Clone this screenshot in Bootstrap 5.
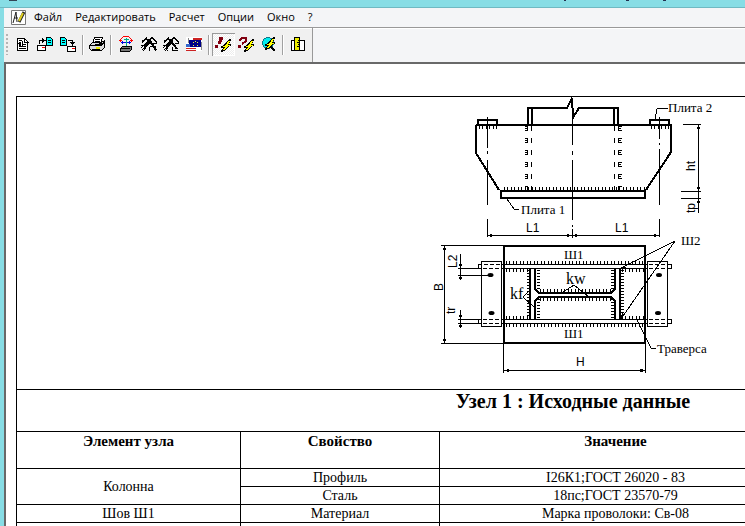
<!DOCTYPE html>
<html lang="ru">
<head>
<meta charset="utf-8">
<meta name="viewport" content="width=device-width, initial-scale=1">
<title>Узел 1 : Исходные данные</title>
<link href="https://cdn.jsdelivr.net/npm/bootstrap@5.3.0/dist/css/bootstrap.min.css" rel="stylesheet">
<style>
body{background:#87dde5;color:#000;font-family:"Open Sans","Noto Sans",sans-serif;font-size:11px;line-height:16px}
.title-strip{height:8px;border-bottom:1px solid #6fb9c2}
.title-strip svg{display:block}
.app-window{margin-left:4px;background:#f4f5f7}
.menu-bar{height:19px;padding-left:6px}
.menu-bar .btn{font-size:11px;line-height:16px;padding:0 6px 1px 7px;border:0;border-radius:0;color:#000}
.tool-area{height:35px;border-top:1px solid #999;background:#f4f5f7;box-shadow:inset 0 1px #fff}
.tool-bar{padding:0 3px 1px 2px;background:#f0f0f0;border-right:1px solid #999;box-shadow:inset 0 1px #fff;width:309px}
.grip{width:2px;height:21px;margin-right:3px;background:repeating-linear-gradient(#b4b4b4 0 2px,transparent 2px 4px)}
.tool-bar .btn{width:23px;height:23px;padding:0 0 2px;border:0;border-radius:0;line-height:0}
.tool-bar .btn.active{background:repeating-conic-gradient(#fff 0 25%,#ececec 0 50%) 0 0/2px 2px;box-shadow:inset 1px 1px #999,inset -1px -1px #fff}
.tool-bar svg,.drawing{shape-rendering:crispEdges}
.tool-sep{width:1px;height:20px;margin:0 3px 0 2px;background:#a0a0a0;box-shadow:1px 0 #fff}
.sheet{border-top:2px solid #696969;border-left:2px solid #696969;background:#fff;padding:32px 0 0 10px;height:calc(100vh - 62px)}
.report{width:1114px;table-layout:fixed;border-collapse:collapse;font-family:"Liberation Serif",serif;font-size:14px;line-height:17px;text-align:center;color:#000;margin:0}
.report td,.report th{border:1px solid #000;padding:0}
.report .tall{height:37px;vertical-align:top;padding-top:1px;font-size:15px}
.report .heading{height:42px;vertical-align:top;font-size:20px;line-height:23px}
.drawing{display:block;margin:0 auto}
.drawing text{fill:#000;font-family:"Liberation Serif",serif;font-size:13px}
.drawing .sans{font-family:"Liberation Sans",sans-serif;font-size:12px}
.drawing .big{font-size:16px}
</style>
<script src="https://cdn.jsdelivr.net/npm/bootstrap@5.3.0/dist/js/bootstrap.bundle.min.js"></script>
</head>
<body class="overflow-hidden">
<div class="title-strip"><svg width="745" height="2" aria-hidden="true"><path d="M9 0h8v1H9z" fill="#345"/><path d="M564 0h2v1h-2zM626 0h3v1h-3zM663 0h3v1h-3z" fill="#213050"/></svg></div>
<div class="app-window">
<nav class="menu-bar d-flex align-items-center" aria-label="Меню">
<svg width="17" height="17" viewBox="0 0 17 17" aria-hidden="true"><path fill="#fff" stroke="#777" d="M1.500 1.500h14v14h-14z"/><path fill="none" stroke="#222" d="M3 14L6 3l1 10M4 9h4"/><path stroke="#222" stroke-width="3" d="M9 13l5-10"/><path stroke="#e0cf20" stroke-width="2" d="M9 12l4-8"/></svg>
<button class="btn" type="button">Файл</button><button class="btn" type="button">Редактировать</button><button class="btn" type="button">Расчет</button><button class="btn" type="button">Опции</button><button class="btn" type="button">Окно</button><button class="btn" type="button">?</button>
</nav>
<div class="tool-area d-flex">
<div class="tool-bar d-flex align-items-center" role="toolbar" aria-label="Инструменты">
<span class="grip"></span>
<button class="btn" type="button" aria-label="Проект"><svg width="16" height="16"><path fill="#fff" stroke="#000" d="M3.500 2.500h7l3 3v9h-10z"/><path stroke="#000" fill="none" d="M10.500 2v4h4M5 4.500h3M4 7.500h3M5 10.500h3M9 10.500h3M5 12.500h7M8.500 5v6"/><path d="M5 6h2v4H5zM8 8h4v1H8z"/></svg></button>
<button class="btn" type="button" aria-label="Открыть"><svg width="16" height="16"><path fill="#0ff" stroke="#000" d="M9.500 1.500h4l2 2v6h-6z"/><path stroke="#000" fill="none" d="M11 4.500h3M11 6.500h3M2.500 8V4.500H7"/><path d="M5 2l4 2.500L5 7z"/><path fill="#fff" stroke="#000" d="M.500 9.500h8v5h-8z"/><path fill="red" d="M5 11h3v1H5z"/></svg></button>
<button class="btn" type="button" aria-label="Сохранить"><svg width="16" height="16"><path fill="#0ff" stroke="#000" d="M.500 1.500h4l2 2v6h-6z"/><path stroke="#000" fill="none" d="M2 4.500h3M2 6.500h3M8 4.500h4.500V8"/><path d="M10 6h5l-2.500 4z"/><path fill="#fff" stroke="#000" d="M7.500 10.500h8v5h-8z"/><path fill="red" d="M12 12h3v1h-3z"/></svg></button>
<span class="tool-sep"></span>
<button class="btn" type="button" aria-label="Печать"><svg width="16" height="16"><path fill="#fff" stroke="#000" d="M3.500 7.500l2-6h8l-2 6z"/><path stroke="#000" fill="none" d="M6 3.500h5M6 5.500h5"/><path fill="#ddd" stroke="#000" d="M.500 9.500l3-3h9l3-2v7l-3 3h-10l-2-2z"/><path stroke="#000" d="M1 9.500h11l3-3M3 13.500h8"/><path fill="#ee0" d="M7 11h4v2H7z"/></svg></button>
<span class="tool-sep"></span>
<button class="btn" type="button" aria-label="Нагрузки"><svg width="16" height="16"><path fill="none" stroke="red" d="M2.500 6V3.500l3-3h5l3 3V6M1 4.500h3M12 4.500h3"/><path stroke="#00d" fill="none" d="M3 6.500h10M4.500 5v3M11.500 5v3"/><path stroke="#0a8" d="M8.500 2v8M6 3.500h5"/><path fill="#777" stroke="#000" d="M2.500 15.500v-3l2-2h9v3l-2 2z"/><path stroke="#000" d="M3 12.500h9"/></svg></button>
<button class="btn" type="button" aria-label="Расчет"><svg width="16" height="16"><g stroke="#000" fill="none"><path stroke-width="2" d="M1 6l5-4M9 5l6 9"/><path d="M0 9.500h3l8-8M0 12l4-4M1 14l9-10M2 15l8-10M6 4l3 3M11 1.500l4 4v2h-3M8.500 11v4M9 10.500h5.500V15M5 3.500h4"/></g></svg></button>
<button class="btn" type="button" aria-label="Подбор"><svg width="16" height="16"><g stroke="#000" fill="none"><path stroke-width="2" d="M1 6l5-4M8 5l6 8"/><path d="M0 9.500h3l8-8M0 12l4-4M1 14l9-10M2 15l8-10M6 4l3 3M11 1.500l4 4v2h-3M5 3.500h4M9.500 11v3h5M2 12l3 3"/></g></svg></button>
<button class="btn" type="button" aria-label="Язык"><svg width="16" height="16"><path fill="#fff" d="M0 1h16v14H0z"/><path fill="#c22" d="M7 2h9v2H7zM0 12h10v1H0zM0 14h10v1H0z"/><path fill="#008" d="M3 4h12v7H3z"/><path fill="#36c" d="M0 8h4v3H0z"/><path fill="#ee3" d="M9 5h1v1H9zM7 6h1v1H7zM11 6h1v1h-1zM7 9h1v1H7zM11 9h1v1h-1z"/><path fill="none" stroke="#888" d="M2.500 2v5M15.500 6v8"/></svg></button>
<span class="tool-sep"></span>
<button class="btn active" type="button" aria-label="Быстрый расчет" aria-pressed="true"><svg width="16" height="16"><path fill="#800010" d="M4 1h4v3H7v2H6v2H3V5h1zM0 9h3v3H0z"/><path fill="#000" d="M14 3h2v2h-1v2h-1v1h2v2h-2v1h-1v1h-1v1h-1v1h-1v1H8v1H6v-2h1v-1h1v-1H6v-2h2V9h1V8h1V7h1V6h1V5h1V4h1z"/><path fill="#ff0" d="M13 5h2v1h-1v2h-1v1h2v1h-2v1h-1v1h-1v1h-1v1H8v-1h1v-1h1v-1H8v-1h2V9h1V8h1V6h1z"/></svg></button>
<button class="btn" type="button" aria-label="Справка"><svg width="16" height="16"><path fill="none" stroke="#800010" stroke-width="2" d="M1 5l3-3h4v3L4 8"/><path fill="#800010" d="M0 9h3v3H0z"/><path fill="#000" d="M14 3h2v2h-1v2h-1v1h2v2h-2v1h-1v1h-1v1h-1v1h-1v1H8v1H6v-2h1v-1h1v-1H6v-2h2V9h1V8h1V7h1V6h1V5h1V4h1z"/><path fill="#ff0" d="M13 5h2v1h-1v2h-1v1h2v1h-2v1h-1v1h-1v1h-1v1H8v-1h1v-1h1v-1H8v-1h2V9h1V8h1V6h1z"/></svg></button>
<button class="btn" type="button" aria-label="Просмотр"><svg width="16" height="16"><circle cx="7" cy="7" r="5.500" fill="#0ee" stroke="#178"/><path stroke="#000" stroke-width="2" d="M10 11l4 4"/><g transform="translate(-2 -2)"><path fill="#000" d="M14 3h2v2h-1v2h-1v1h2v2h-2v1h-1v1h-1v1h-1v1h-1v1H8v1H6v-2h1v-1h1v-1H6v-2h2V9h1V8h1V7h1V6h1V5h1V4h1z"/><path fill="#ff0" d="M13 5h2v1h-1v2h-1v1h2v1h-2v1h-1v1h-1v1h-1v1H8v-1h1v-1h1v-1H8v-1h2V9h1V8h1V6h1z"/></g></svg></button>
<span class="tool-sep"></span>
<button class="btn" type="button" aria-label="Размеры"><svg width="16" height="16"><path fill="#fff" stroke="#000" d="M1.500 4.500h13v10h-13z"/><path fill="#ee0" stroke="#000" d="M4.500 1.500h5v13h-5z"/><path stroke="#000" d="M8 4.500h2M7 6.500h3M8 8.500h2M7 10.500h3"/></svg></button>
</div>
</div>
<main class="sheet overflow-hidden">
<table class="report">
<colgroup><col style="width:224px"><col style="width:199px"><col style="width:352px"><col></colgroup>
<tbody>
<tr><td colspan="4">
<svg class="drawing" width="290" height="292" viewBox="428 97 290 292" role="img" aria-label="Схема базы колонны">
<!-- elevation -->
<g fill="none" stroke="#000" stroke-width="2">
<path d="M528 125V108H567L571 100L574 116L579 108H618V125M532 108V125M614 108V125"/>
<path d="M478 125V120H497V125M650 125V120H669V125"/>
<path d="M476 125H671V152L646 190M476 125V153L499 190M501 191H645V198H501Z"/>
</g>
<g fill="none" stroke="#000">
<path d="M531.500 126V190M614.500 126V190" stroke-dasharray="5 7"/>
<path d="M527.500 126V190M618.500 126V190" stroke-dasharray="5 7"/>
<path d="M525 126.500h3M525 128.500h3M525 130.500h3M525 138.500h3M525 140.500h3M525 142.500h3M525 150.500h3M525 152.500h3M525 154.500h3M525 162.500h3M525 164.500h3M525 166.500h3M525 174.500h3M525 176.500h3M525 178.500h3M525 186.500h3M619 126.500h3M619 128.500h2M619 130.500h3M619 138.500h3M619 140.500h2M619 142.500h3M619 150.500h3M619 152.500h2M619 154.500h3M619 162.500h3M619 164.500h2M619 166.500h3M619 174.500h3M619 176.500h2M619 178.500h3M619 186.500h3"/>
<path d="M504 188.500H645M479 127.500H499M651 127.500H670" stroke-width="3" stroke-dasharray="1 2 1 3"/>
<path d="M487.500 117V148M487.500 151V154M487.500 160V205M487.500 219V237M572.500 98V145M572.500 151V155M572.500 160V220M572.500 225V227M572.500 229V238M659.500 117V139M659.500 143V145M659.500 149V205M659.500 219V237"/>
<path d="M507 199L514 209H519M655 119L657 109L659 108H668"/>
<path d="M487 235.500H659M698.500 125V213M683 124.500H701M681 191.500H701M681 198.500H701"/>
</g>
<path d="M488 235.500l4-2v4zM571 235.500l-4-2v4zM573 235.500l4-2v4zM658 235.500l-4-2v4zM698.500 125l-2 4h4zM698.500 191l-2-4h4zM698.500 199l-2 4h4z"/>
<!-- plan -->
<path fill="none" stroke="#000" stroke-width="2" d="M504 246H645V343H504Z"/>
<g fill="none" stroke="#000">
<path d="M481.500 261.500h20v65h-20zM647.500 261.500h20v65h-20z"/>
<path d="M504 264.500H647M504 268.500H647M504 319.500H647M504 323.500H647M481 264.500h-3v4h3M481 319.500h-3v4h3M668 264.500h3v4h-3M668 319.500h3v4h-3"/>
<path d="M484 264.500H504M483 268.500H504M483 319.500H504M483 323.500H504M649 264.500H667M649 268.500H667M649 319.500H667M649 323.500H667" stroke-dasharray="4 2"/>
<path d="M506 262.500H644M506 325.500H644M506 270.500H529M622 270.500H644M506 317.500H529M622 317.500H644M540 290.500H613M540 299.500H613" stroke-width="3" stroke-dasharray="1 2 1 3"/>
<path d="M528.500 270V318M538.500 270V290M538.500 299V318M612.500 270V290M612.500 299V318M622.500 270V318" stroke-width="3" stroke-dasharray="1 2"/>
</g>
<g fill="none" stroke="#000" stroke-width="2">
<path d="M530 269V319M620 269V319M535 269V289L539 293H611L615 289V269M535 319V301L539 297H611L615 301V319"/>
</g>
<g shape-rendering="auto"><ellipse cx="490.500" cy="275" rx="3" ry="2"/><ellipse cx="491.500" cy="313" rx="3" ry="2"/><ellipse cx="659" cy="275" rx="3" ry="2"/><ellipse cx="658" cy="313" rx="3" ry="2"/></g>
<g fill="none" stroke="#000">
<path d="M444.500 245V343M441 245.500H504M441 343.500H504M460.500 254V280M458 268.500H478M458 275.500H489M460.500 310V328M458 319.500H478M458 323.500H478"/>
<path d="M503.500 343V373M645.500 343V373M504 370.500H645"/>
<path d="M675 241L621 268M675 241L621 319M637 320L651 348H656M574 285L563 292M574 285L589 297M523 297L529 291M523 297L535 308"/>
</g>
<path d="M444.500 246l-2 4h4zM444.500 343l-2-4h4zM460.500 268l-2-4h4zM460.500 275l-2 4h4zM460.500 319l-2-4h4zM460.500 323l-2 4h4zM504 370.500l5-2v4zM645 370.500l-5-2v4zM621 269l5-1-2-2zM621 318l1-5 3 2z"/>
<text x="521" y="214">Плита 1</text><text x="668" y="112">Плита 2</text>
<text class="sans" x="526" y="232">L1</text><text class="sans" x="615" y="232">L1</text><text class="sans" x="576" y="366">H</text>
<text class="sans" transform="translate(695 171) rotate(-90)">ht</text><text class="sans" transform="translate(695 213) rotate(-90)">tp</text>
<text class="sans" transform="translate(457 268) rotate(-90)">L2</text><text class="sans" transform="translate(455 314) rotate(-90)">tr</text><text class="sans" transform="translate(443 291) rotate(-90)">B</text>
<text x="564" y="259">Ш1</text><text x="564" y="338">Ш1</text><text x="681" y="245">Ш2</text><text x="657" y="353">Траверса</text>
<text class="big" x="510" y="299">kf</text><text class="big" x="566" y="284">kw</text>
</svg>
</td></tr>
<tr><th class="heading" colspan="4">Узел 1 : Исходные данные</th></tr>
<tr><th class="tall" scope="col">Элемент узла</th><th class="tall" scope="col">Свойство</th><th class="tall" scope="col">Значение</th><td></td></tr>
<tr><td rowspan="2">Колонна</td><td>Профиль</td><td>I26К1;ГОСТ 26020 - 83</td><td></td></tr>
<tr><td>Сталь</td><td>18пс;ГОСТ 23570-79</td><td></td></tr>
<tr><td>Шов Ш1</td><td>Материал</td><td>Марка проволоки: Св-08</td><td></td></tr>
<tr><td>&nbsp;</td><td></td><td></td><td></td></tr>
</tbody>
</table>
</main>
</div>
</body>
</html>
